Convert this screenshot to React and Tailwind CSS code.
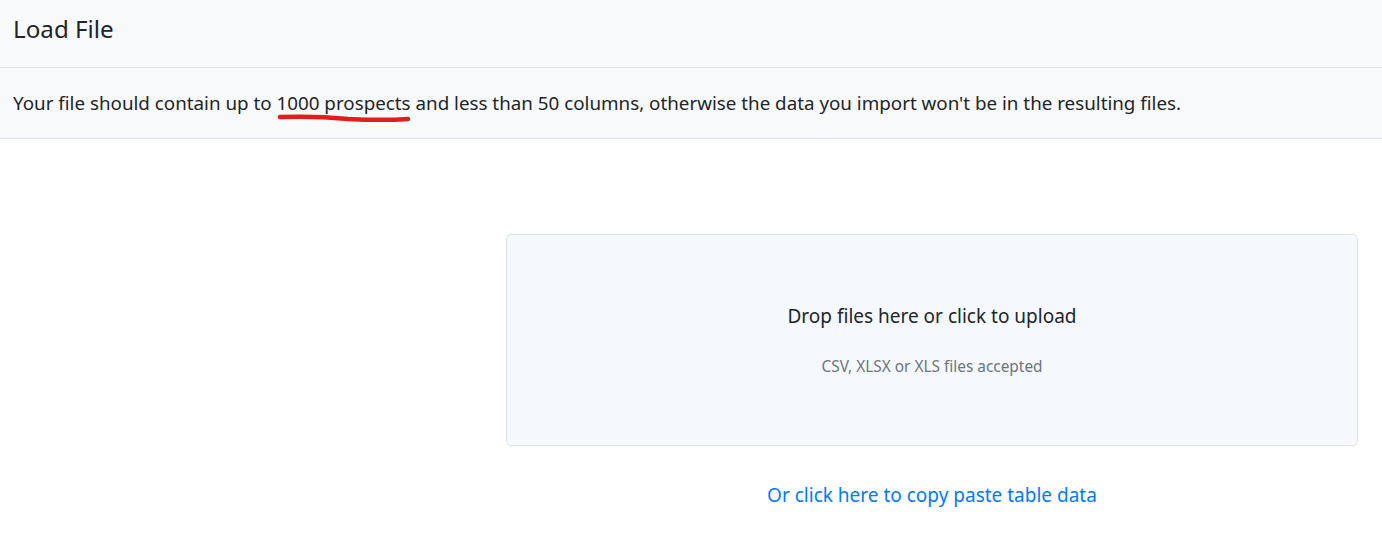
import React from "react";

export default function App() {
  return (
    <div className="min-h-[537px] bg-white text-[#212529]" style={{ fontFamily: '"Noto Sans", "Open Sans", sans-serif' }}>
      <div className="h-[68px] bg-[#f8f9fa] border-b border-[#dee2e6] px-[13px] pt-[12px]">
        <h1 className="text-[24.2px] leading-[34px] font-normal">Load File</h1>
      </div>
      <div className="h-[71px] bg-[#f8f9fa] border-b border-[#dee2e6] px-[13px] flex items-center">
        <p className="relative text-[18.8px] text-[#212529]">
          Your file should contain up to{" "}
          <span className="relative">
            1000 prospects
            <svg className="absolute left-[0px] top-[23px] w-full h-[10px]" viewBox="0 0 132 10" preserveAspectRatio="none">
              <path d="M3 4 C 30 3, 60 5, 70 6 C 90 7, 115 7, 129 6" stroke="#e31c1c" strokeWidth="4.5" strokeLinecap="round" fill="none" />
            </svg>
          </span>{" "}
          and less than 50 columns, otherwise the data you import won't be in the resulting files.
        </p>
      </div>
      <div className="flex pt-[95px]">
        <div className="w-[506px] shrink-0" />
        <div className="w-[852px] flex flex-col items-center">
          <div className="w-full h-[212px] bg-[#f5f8fc] border border-[#dde2e8] rounded-[5px] flex flex-col items-center pt-[67px]">
            <div className="text-[19px] leading-[28px] text-[#212529]">Drop files here or click to upload</div>
            <div className="mt-[25px] text-[15.4px] text-[#6c757d]">CSV, XLSX or XLS files accepted</div>
          </div>
          <a className="mt-[35px] text-[19px] text-[#007bff] cursor-pointer">Or click here to copy paste table data</a>
        </div>
      </div>
    </div>
  );
}
